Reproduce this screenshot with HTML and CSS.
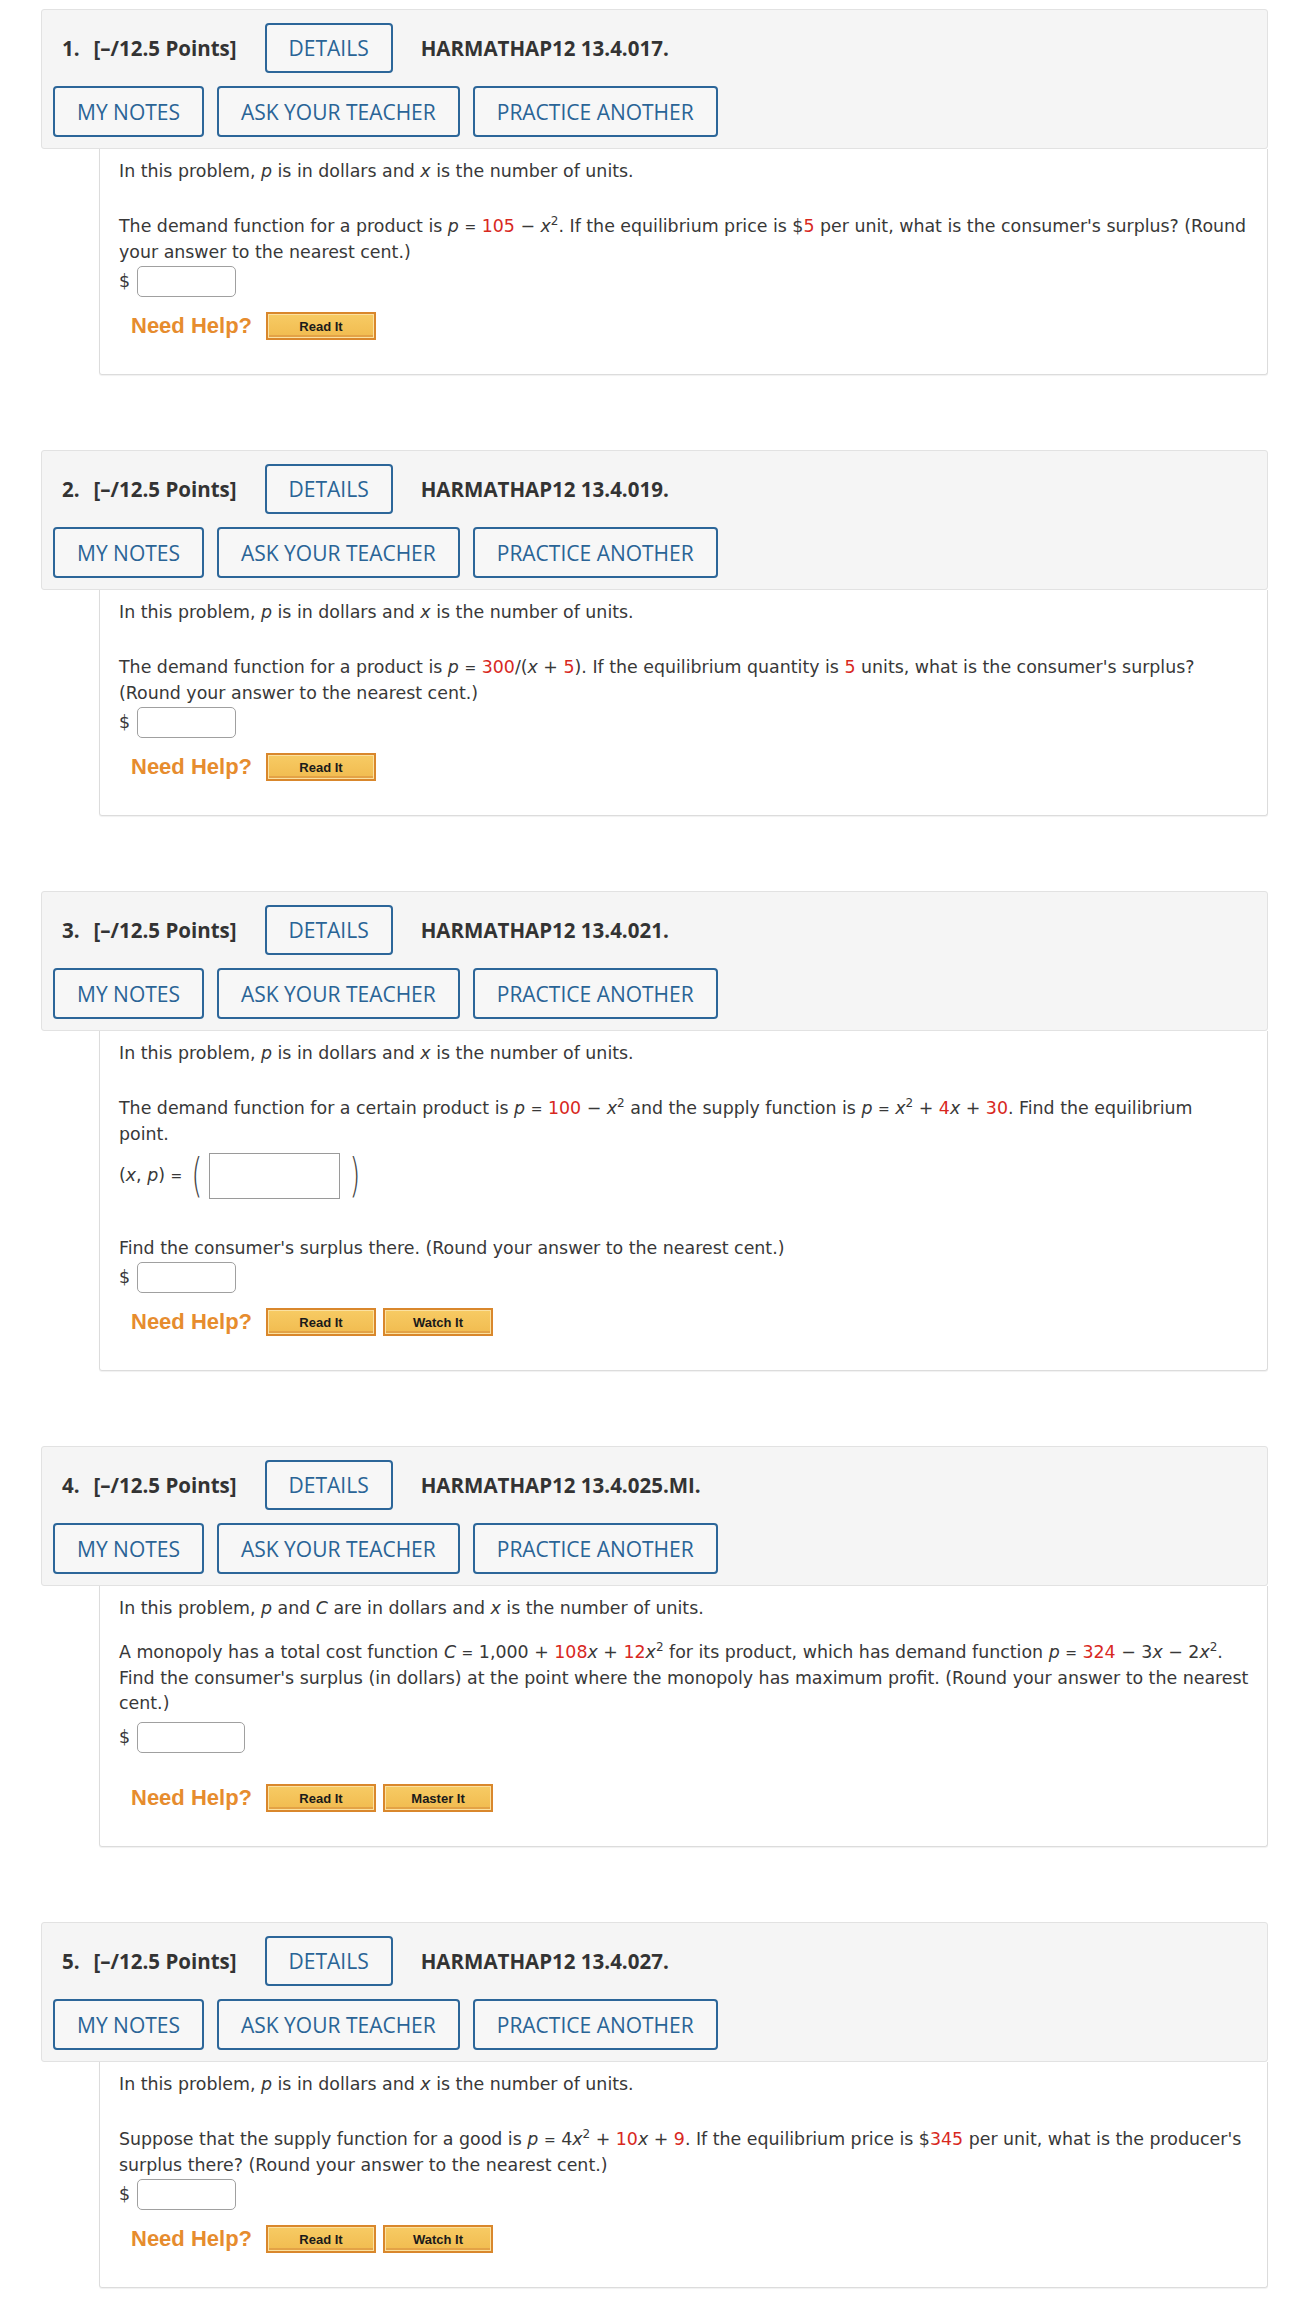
FILE: index.html
```html
<!DOCTYPE html>
<html>
<head>
<meta charset="utf-8">
<link rel="stylesheet" href="styles.css">
</head>
<body>
<div class="page">

<section class="question">
  <div class="q-head">
    <div class="row1"><span class="num">1.</span><span class="pts">[–/12.5 Points]</span><span class="btn">DETAILS</span><span class="code">HARMATHAP12 13.4.017.</span></div>
    <div class="row2"><span class="btn">MY NOTES</span><span class="btn">ASK YOUR TEACHER</span><span class="btn">PRACTICE ANOTHER</span></div>
  </div>
  <div class="q-body">
    <p class="intro">In this problem, <i>p</i> is in dollars and <i>x</i> is the number of units.</p>
    <p class="qtext">The demand function for a product is <i>p</i> <span class="eq">=</span> <span class="red">105</span> − <i>x</i><sup>2</sup>. If the equilibrium price is $<span class="red">5</span> per unit, what is the consumer's surplus? (Round<br>your answer to the nearest cent.)</p>
    <div class="answer"><span class="dollar">$</span><span class="inp"></span></div>
    <div class="help"><span class="need">Need Help?</span><span class="hbtn">Read It</span></div>
  </div>
</section>

<section class="question">
  <div class="q-head">
    <div class="row1"><span class="num">2.</span><span class="pts">[–/12.5 Points]</span><span class="btn">DETAILS</span><span class="code">HARMATHAP12 13.4.019.</span></div>
    <div class="row2"><span class="btn">MY NOTES</span><span class="btn">ASK YOUR TEACHER</span><span class="btn">PRACTICE ANOTHER</span></div>
  </div>
  <div class="q-body">
    <p class="intro">In this problem, <i>p</i> is in dollars and <i>x</i> is the number of units.</p>
    <p class="qtext">The demand function for a product is <i>p</i> <span class="eq">=</span> <span class="red">300</span>/(<i>x</i> + <span class="red">5</span>). If the equilibrium quantity is <span class="red">5</span> units, what is the consumer's surplus?<br>(Round your answer to the nearest cent.)</p>
    <div class="answer"><span class="dollar">$</span><span class="inp"></span></div>
    <div class="help"><span class="need">Need Help?</span><span class="hbtn">Read It</span></div>
  </div>
</section>

<section class="question">
  <div class="q-head">
    <div class="row1"><span class="num">3.</span><span class="pts">[–/12.5 Points]</span><span class="btn">DETAILS</span><span class="code">HARMATHAP12 13.4.021.</span></div>
    <div class="row2"><span class="btn">MY NOTES</span><span class="btn">ASK YOUR TEACHER</span><span class="btn">PRACTICE ANOTHER</span></div>
  </div>
  <div class="q-body">
    <p class="intro">In this problem, <i>p</i> is in dollars and <i>x</i> is the number of units.</p>
    <p class="qtext">The demand function for a certain product is <i>p</i> <span class="eq">=</span> <span class="red">100</span> − <i>x</i><sup>2</sup> and the supply function is <i>p</i> <span class="eq">=</span> <i>x</i><sup>2</sup> + <span class="red">4</span><i>x</i> + <span class="red">30</span>. Find the equilibrium<br>point.</p>
    <div class="point-row"><span class="xp">(<i>x</i>, <i>p</i>) <span class="eq">=</span></span><span class="paren">(</span><span class="pbox"></span><span class="paren">)</span></div>
    <p class="qtext find">Find the consumer's surplus there. (Round your answer to the nearest cent.)</p>
    <div class="answer"><span class="dollar">$</span><span class="inp"></span></div>
    <div class="help"><span class="need">Need Help?</span><span class="hbtn">Read It</span><span class="hbtn">Watch It</span></div>
  </div>
</section>

<section class="question">
  <div class="q-head">
    <div class="row1"><span class="num">4.</span><span class="pts">[–/12.5 Points]</span><span class="btn">DETAILS</span><span class="code">HARMATHAP12 13.4.025.MI.</span></div>
    <div class="row2"><span class="btn">MY NOTES</span><span class="btn">ASK YOUR TEACHER</span><span class="btn">PRACTICE ANOTHER</span></div>
  </div>
  <div class="q-body">
    <p class="intro tight">In this problem, <i>p</i> and <i>C</i> are in dollars and <i>x</i> is the number of units.</p>
    <p class="qtext">A monopoly has a total cost function <i>C</i> <span class="eq">=</span> 1,000 + <span class="red">108</span><i>x</i> + <span class="red">12</span><i>x</i><sup>2</sup> for its product, which has demand function <i>p</i> <span class="eq">=</span> <span class="red">324</span> − 3<i>x</i> − 2<i>x</i><sup>2</sup>.<br>Find the consumer's surplus (in dollars) at the point where the monopoly has maximum profit. (Round your answer to the nearest<br>cent.)</p>
    <div class="answer spaced"><span class="dollar">$</span><span class="inp wide"></span></div>
    <div class="help far"><span class="need">Need Help?</span><span class="hbtn">Read It</span><span class="hbtn">Master It</span></div>
  </div>
</section>

<section class="question">
  <div class="q-head">
    <div class="row1"><span class="num">5.</span><span class="pts">[–/12.5 Points]</span><span class="btn">DETAILS</span><span class="code">HARMATHAP12 13.4.027.</span></div>
    <div class="row2"><span class="btn">MY NOTES</span><span class="btn">ASK YOUR TEACHER</span><span class="btn">PRACTICE ANOTHER</span></div>
  </div>
  <div class="q-body">
    <p class="intro">In this problem, <i>p</i> is in dollars and <i>x</i> is the number of units.</p>
    <p class="qtext">Suppose that the supply function for a good is <i>p</i> <span class="eq">=</span> 4<i>x</i><sup>2</sup> + <span class="red">10</span><i>x</i> + <span class="red">9</span>. If the equilibrium price is $<span class="red">345</span> per unit, what is the producer's<br>surplus there? (Round your answer to the nearest cent.)</p>
    <div class="answer"><span class="dollar">$</span><span class="inp"></span></div>
    <div class="help"><span class="need">Need Help?</span><span class="hbtn">Read It</span><span class="hbtn">Watch It</span></div>
  </div>
</section>

</div>
</body>
</html>
```

FILE: styles.css
```css
html, body {
  margin: 0;
  padding: 0;
  background: #ffffff;
}

.page {
  padding: 9px 22px 20px 41px;
  display: flex;
  flex-direction: column;
  gap: 75px;
}

.question {
  display: flex;
  flex-direction: column;
}

.q-head {
  background: #f5f5f5;
  border: 1px solid #e2e2e2;
  border-radius: 3px;
  padding: 13px 11px 11px 11px;
  display: flex;
  flex-direction: column;
  gap: 13px;
  font-family: "Open Sans", "Noto Sans", sans-serif;
}

.row1 {
  display: flex;
  align-items: center;
  padding-left: 9px;
  height: 50px;
}

.row2 {
  display: flex;
  gap: 13px;
  height: 51px;
}

.num {
  font-size: 20.5px;
  font-weight: 700;
  color: #333;
  margin-right: 14px;
}

.pts {
  font-size: 20.5px;
  font-weight: 700;
  color: #333;
  margin-right: 28px;
}

.code {
  font-size: 20.5px;
  font-weight: 700;
  color: #333;
  margin-left: 28px;
}

.btn {
  box-sizing: border-box;
  display: flex;
  align-items: center;
  justify-content: center;
  height: 50px;
  padding: 0 22px;
  border: 2px solid #2c6699;
  border-radius: 4px;
  background: #f7f7f7;
  color: #2a6496;
  font-size: 21px;
  font-weight: 500;
}

.row2 .btn {
  height: 51px;
}

.q-body {
  margin-left: 58px;
  border: 1px solid #dcdcdc;
  border-top: none;
  border-radius: 0 0 3px 3px;
  box-shadow: 0 1px 1px rgba(0, 0, 0, 0.06);
  padding: 10px 19px 34px 19px;
  font-family: "DejaVu Sans", Verdana, sans-serif;
  font-size: 17.4px;
  line-height: 25px;
  color: #383838;
}

.q-body p {
  margin: 0;
}

.qtext {
  white-space: nowrap;
}

.intro {
  margin-bottom: 30px !important;
}

.intro.tight {
  margin-bottom: 19px !important;
}

.q-body i {
  font-style: italic;
}

.q-body sup {
  font-size: 12px;
  line-height: 0;
  vertical-align: 7px;
}

.eq {
  font-size: 14px;
}

.red {
  color: #d8281e;
}

.answer {
  display: flex;
  align-items: center;
  height: 32px;
}

.answer.spaced {
  margin-top: 5px;
}

.dollar {
  width: 18px;
}

.inp {
  box-sizing: border-box;
  width: 99px;
  height: 31px;
  border: 1px solid #a0a0a0;
  border-radius: 5px;
  background: #fff;
}

.inp.wide {
  width: 108px;
}

.point-row {
  display: flex;
  align-items: center;
  height: 47px;
  margin-top: 5px;
}

.xp {
  margin-right: 6px;
}

.paren {
  font-family: "DejaVu Sans", sans-serif;
  font-weight: 200;
  font-size: 46px;
  line-height: 47px;
  color: #444;
  transform: scaleX(0.6);
}

.pbox {
  box-sizing: border-box;
  width: 131px;
  height: 46px;
  border: 1px solid #9a9a9a;
  background: #fff;
  margin: 0 6px 0 3px;
}

.find {
  margin-top: 37px !important;
}

.help {
  display: flex;
  align-items: center;
  margin-top: 15px;
  margin-left: 12px;
  height: 28px;
}

.help.far {
  margin-top: 31px;
}

.need {
  font-family: "Liberation Sans", Arial, sans-serif;
  font-weight: 700;
  font-size: 22px;
  color: #e68c2e;
  margin-right: 14px;
  line-height: 28px;
}

.hbtn {
  box-sizing: border-box;
  width: 110px;
  height: 28px;
  margin-right: 7px;
  display: flex;
  align-items: center;
  justify-content: center;
  border: 2px solid #d9872c;
  background: linear-gradient(#f7cb64, #f1bb4f);
  box-shadow: inset 0 0 0 1px #fbe1a0, inset 0 -2px 0 1px #e3a246;
  font-family: "Liberation Sans", Arial, sans-serif;
  font-weight: 700;
  font-size: 13px;
  color: #1a1a1a;
}
```
